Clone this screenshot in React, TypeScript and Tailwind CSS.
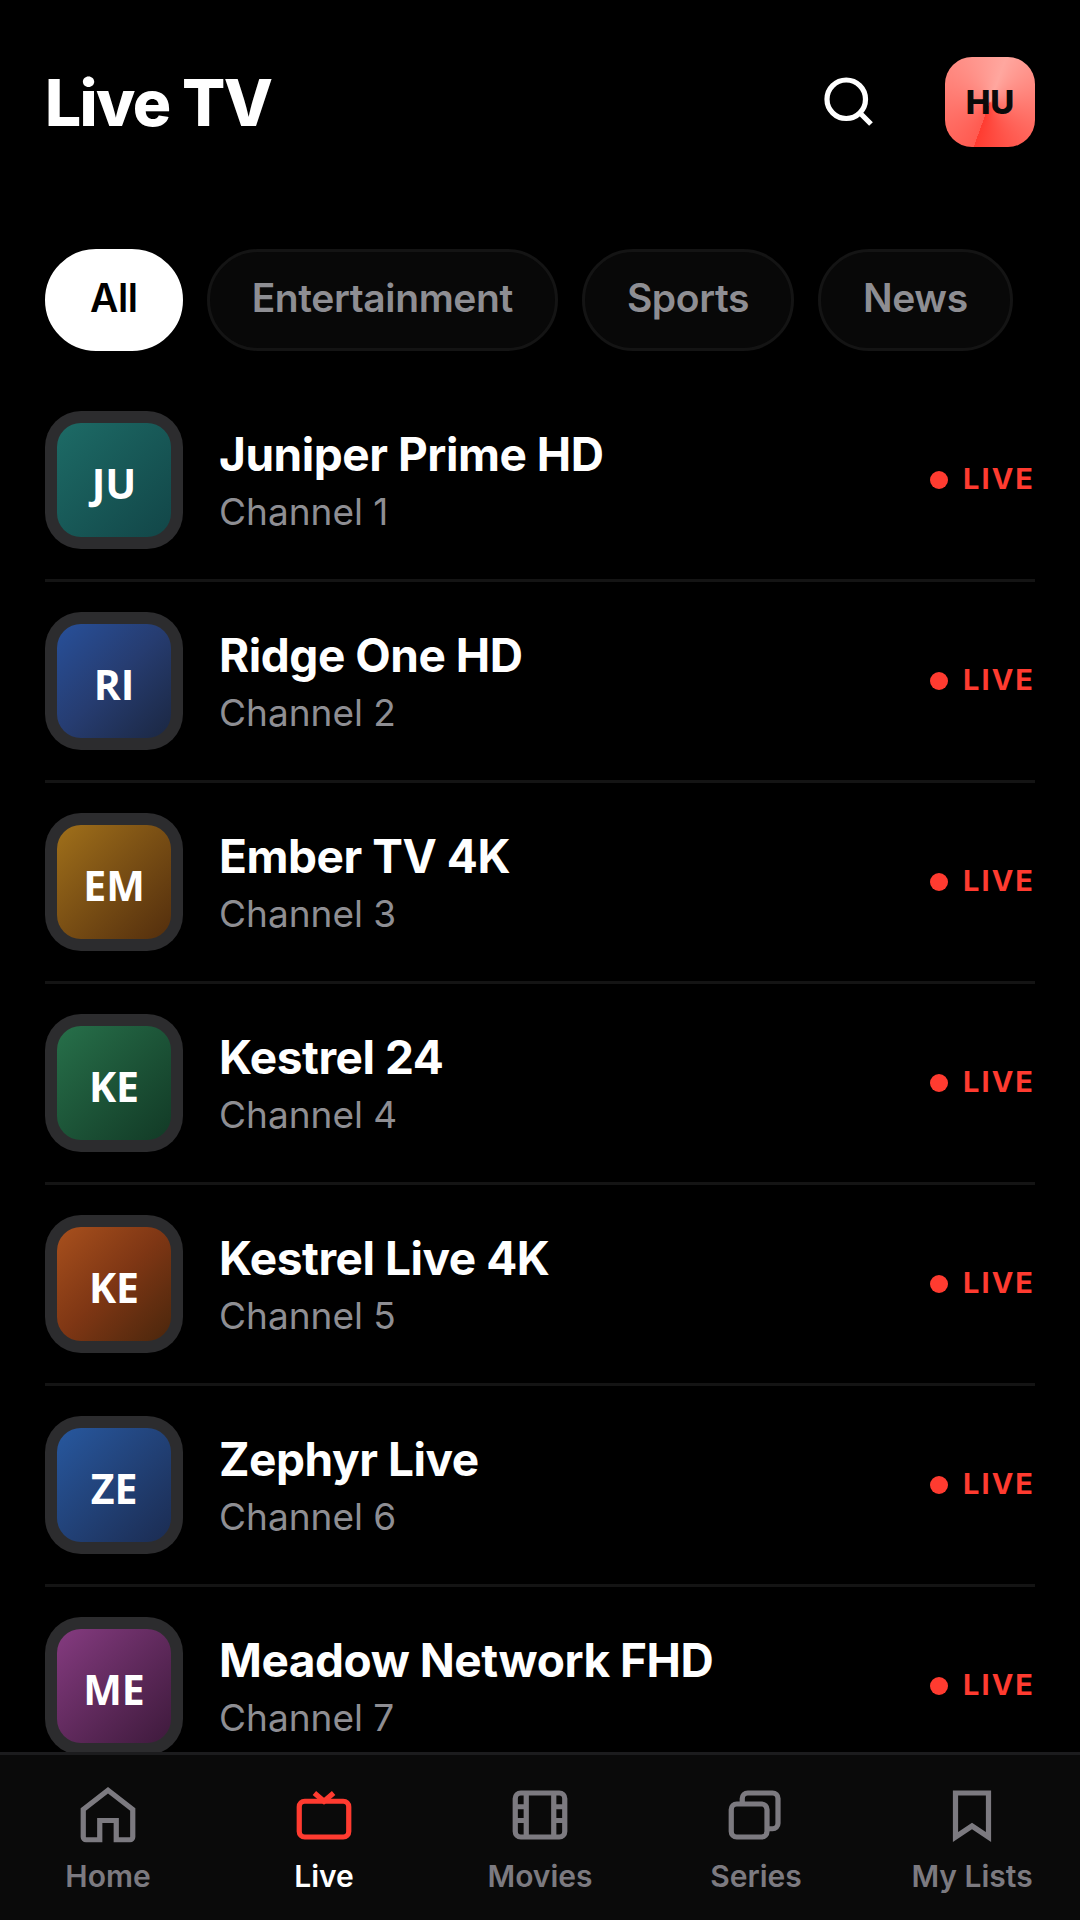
import type { ReactNode } from "react";

interface Channel {
  number: number;
  name: string;
  initials: string;
  gradient: string;
}

const categories = ["All", "Entertainment", "Sports", "News"];

const channels: Channel[] = [
  { number: 1, name: "Juniper Prime HD", initials: "JU", gradient: "from-[#1d6b66] to-[#124648]" },
  { number: 2, name: "Ridge One HD", initials: "RI", gradient: "from-[#27509a] via-[#263c70] to-[#1b2742]" },
  { number: 3, name: "Ember TV 4K", initials: "EM", gradient: "from-[#a0701a] to-[#532e0d]" },
  { number: 4, name: "Kestrel 24", initials: "KE", gradient: "from-[#27704a] to-[#123a26]" },
  { number: 5, name: "Kestrel Live 4K", initials: "KE", gradient: "from-[#a8501d] via-[#7e3614] to-[#4a260c]" },
  { number: 6, name: "Zephyr Live", initials: "ZE", gradient: "from-[#27589f] to-[#1b2c52]" },
  { number: 7, name: "Meadow Network FHD", initials: "ME", gradient: "from-[#853b80] to-[#3e1a3c]" },
];

const tabs: { label: string; icon: ReactNode }[] = [
  {
    label: "Home",
    icon: <path d="M3 10 12 3l9 7v10a1 1 0 0 1-1 1h-5v-7H9v7H4a1 1 0 0 1-1-1z" />,
  },
  {
    label: "Live",
    icon: (
      <>
        <rect x="3" y="7" width="18" height="13" rx="2" />
        <path d="M8.5 4 12 7l3.5-3" />
      </>
    ),
  },
  {
    label: "Movies",
    icon: (
      <>
        <rect x="3" y="4" width="18" height="16" rx="2" />
        <path d="M7 4v16M17 4v16M3 9h4M3 14h4M17 9h4M17 14h4" />
      </>
    ),
  },
  {
    label: "Series",
    icon: (
      <>
        <rect x="3" y="8" width="13" height="12" rx="2" />
        <path d="M7 8V6a2 2 0 0 1 2-2h9a2 2 0 0 1 2 2v9a2 2 0 0 1-2 2h-2" />
      </>
    ),
  },
  {
    label: "My Lists",
    icon: <path d="M6 4h12v16l-6-4-6 4z" />,
  },
];

const Icon = ({ children }: { children: ReactNode }) => (
  <svg
    viewBox="0 0 24 24"
    className="size-[66px]"
    fill="none"
    stroke="currentColor"
    strokeWidth="1.9"
    aria-hidden="true"
  >
    {children}
  </svg>
);

const Header = () => (
  <header className="flex items-center justify-between px-[45px] pt-[57px]">
    <h1 className="pt-0.5 text-[64px] leading-[88px] font-extrabold tracking-tight">Live TV</h1>
    <div className="flex items-center gap-9">
      <button type="button" aria-label="Search" className="px-[27px]">
        <Icon>
          <circle cx="11" cy="11" r="7" />
          <path d="m16 16 4 4" />
        </Icon>
      </button>
      <button
        type="button"
        aria-label="Profile HU"
        className="size-[90px] rounded-[27px] bg-[conic-gradient(from_200deg,#ff5a50,#ffa79f_50%,#ff3b30)] pt-0.5 text-[33px] font-extrabold text-[#0a0a0a]"
      >
        HU
      </button>
    </div>
  </header>
);

const CategoryFilter = () => (
  <div className="mt-[102px] flex gap-6 px-[45px]">
    {categories.map((category, index) => (
      <button
        key={category}
        type="button"
        aria-pressed={index === 0}
        className={`h-[102px] rounded-full border-[3px] px-[42px] pb-[3px] text-[39px] font-semibold tracking-[-0.01em] ${
          index === 0
            ? "border-white bg-white text-black"
            : "border-[#141414] bg-[#080808] text-[#8e8e93]"
        }`}
      >
        {category}
      </button>
    ))}
  </div>
);

const ChannelRow = ({ channel }: { channel: Channel }) => (
  <li className="flex items-center gap-9 border-b-[3px] border-[#141414] py-[30px]">
    <div className="size-[138px] shrink-0 rounded-[36px] bg-[#2c2c2e] p-3">
      <div
        className={`flex size-full items-center justify-center rounded-3xl bg-linear-135 pt-2 font-['Open_Sans',sans-serif] text-[41px] font-bold ${channel.gradient}`}
      >
        {channel.initials}
      </div>
    </div>
    <div className="min-w-0 flex-1 pt-1">
      <h2 className="truncate text-[46px] leading-[60px] font-bold tracking-[-0.01em]">
        {channel.name}
      </h2>
      <p className="text-[37px] leading-[56px] text-[#8e8e93]">Channel {channel.number}</p>
    </div>
    <span className="flex items-center gap-[15px] text-[29px] font-bold tracking-[0.07em] text-[#ff3b30]">
      <span className="size-[18px] rounded-full bg-[#ff3b30]" />
      <span className="pb-[3px]">LIVE</span>
    </span>
  </li>
);

const TabBar = () => (
  <nav className="grid h-[168px] shrink-0 grid-cols-5 border-t-[3px] border-[#1c1c1e] bg-[#0a0a0a]">
    {tabs.map((tab) => {
      const active = tab.label === "Live";

      return (
        <a
          key={tab.label}
          href={`#${tab.label.toLowerCase().replace(" ", "-")}`}
          aria-current={active ? "page" : undefined}
          className={`flex flex-col items-center gap-[10px] pt-[27px] text-[30px] leading-[36px] font-semibold ${
            active ? "text-white" : "text-[#7c7a80]"
          }`}
        >
          <span className={active ? "text-[#ff3b30]" : ""}>
            <Icon>{tab.icon}</Icon>
          </span>
          {tab.label}
        </a>
      );
    })}
  </nav>
);

export default function App() {
  return (
    <div className="flex h-screen flex-col bg-black font-['Inter',sans-serif] text-white">
      <Header />
      <CategoryFilter />
      <main className="mt-[30px] min-h-0 flex-1 overflow-hidden px-[45px]">
        <ul>
          {channels.map((channel) => (
            <ChannelRow key={channel.number} channel={channel} />
          ))}
        </ul>
      </main>
      <TabBar />
    </div>
  );
}
